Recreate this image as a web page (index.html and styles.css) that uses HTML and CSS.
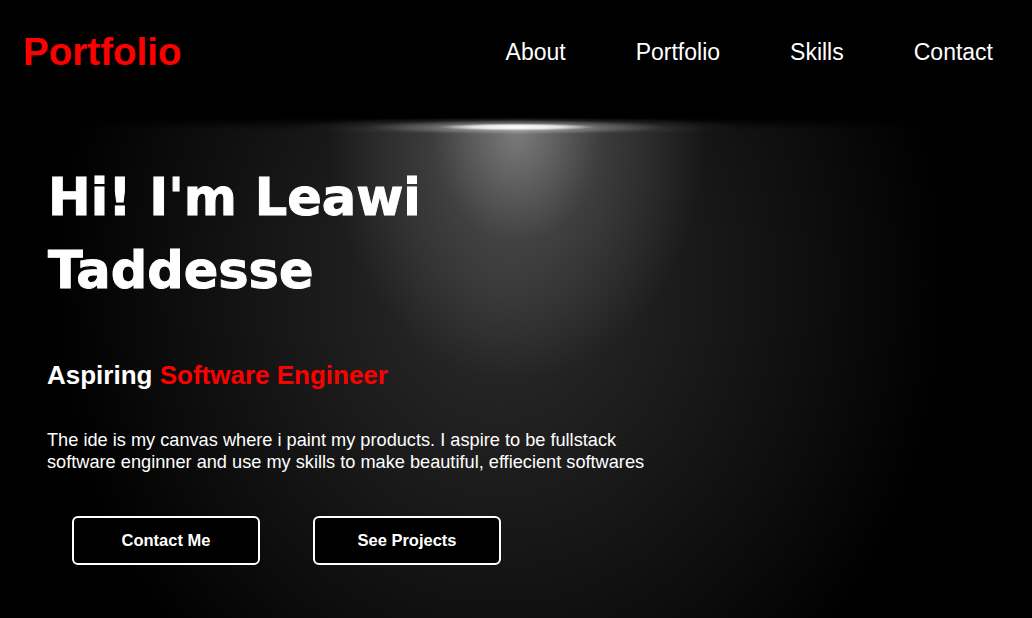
FILE: index.html
```html
<!DOCTYPE html>
<html lang="en">
<head>
<meta charset="utf-8">
<title>Portfolio</title>
<link rel="stylesheet" href="styles.css">
</head>
<body>
<header class="topbar">
  <a class="logo" href="#">Portfolio</a>
  <nav class="nav">
    <a href="#">About</a>
    <a href="#">Portfolio</a>
    <a href="#">Skills</a>
    <a href="#">Contact</a>
  </nav>
</header>
<section class="hero">
  <h1 class="hero-title">Hi! I'm Leawi<br>Taddesse</h1>
  <h2 class="hero-sub">Aspiring <span class="accent">Software Engineer</span></h2>
  <p class="hero-text">The ide is my canvas where i paint my products. I aspire to be fullstack software enginner and use my skills to make beautiful, effiecient softwares</p>
  <div class="actions">
    <a class="btn" href="#">Contact Me</a>
    <a class="btn" href="#">See Projects</a>
  </div>
</section>
</body>
</html>
```

FILE: styles.css
```css
* { box-sizing: border-box; }
html, body {
  margin: 0;
  padding: 0;
  background: #000;
  color: #fff;
  font-family: "Liberation Sans", Arial, sans-serif;
  height: 100%;
  overflow: hidden;
}
a { text-decoration: none; color: inherit; }

.topbar {
  height: 104px;
  display: flex;
  align-items: center;
  justify-content: space-between;
  padding: 0 39px 0 23px;
  background: #000;
}
.logo {
  color: #ff0000;
  font-weight: 700;
  font-size: 38.6px;
}
.nav {
  display: flex;
  gap: 70px;
}
.nav a {
  color: #fff;
  font-size: 23px;
}

.hero {
  height: 514px;
  padding: 57px 0 0 47px;
  background:
    radial-gradient(ellipse 78px 3.5px at 517px 23px, rgba(255,255,255,1) 0%, rgba(255,255,255,0.75) 55%, rgba(255,255,255,0) 100%),
    radial-gradient(ellipse 150px 7px at 517px 23px, rgba(255,255,255,0.45) 0%, rgba(255,255,255,0) 100%),
    radial-gradient(ellipse 230px 9px at 520px 22px, rgba(255,255,255,0.16) 0%, rgba(255,255,255,0) 100%),
    linear-gradient(to bottom, #000 0px, #000 14px, rgba(0,0,0,0) 26px),
    radial-gradient(ellipse 190px 250px at 517px 26px, rgba(140,140,140,0.85) 0%, rgba(90,90,90,0.5) 45%, rgba(40,40,40,0) 100%),
    radial-gradient(ellipse 450px 520px at 500px 180px, #2c2c2c 0%, #1b1b1b 40%, #0d0d0d 72%, #000 100%);
  background-color: #000;
}

.hero-title {
  margin: 0;
  font-family: "DejaVu Sans", "Liberation Sans", sans-serif;
  font-weight: 700;
  font-size: 51px;
  line-height: 73px;
  -webkit-text-stroke: 1px #fff;
  margin-left: 1px;
}
.hero-sub {
  margin: 53px 0 0;
  font-size: 26px;
  font-weight: 700;
}
.accent { color: #ff0000; }

.hero-text {
  margin: 39px 0 0;
  max-width: 625px;
  font-size: 18.2px;
  line-height: 21.6px;
}

.actions {
  display: flex;
  gap: 53px;
  margin: 43px 0 0 25px;
}
.btn {
  width: 188px;
  height: 49px;
  display: flex;
  align-items: center;
  justify-content: center;
  border: 2px solid #fff;
  border-radius: 6px;
  background: #000;
  font-weight: 700;
  font-size: 16.5px;
  color: #fff;
}
```
